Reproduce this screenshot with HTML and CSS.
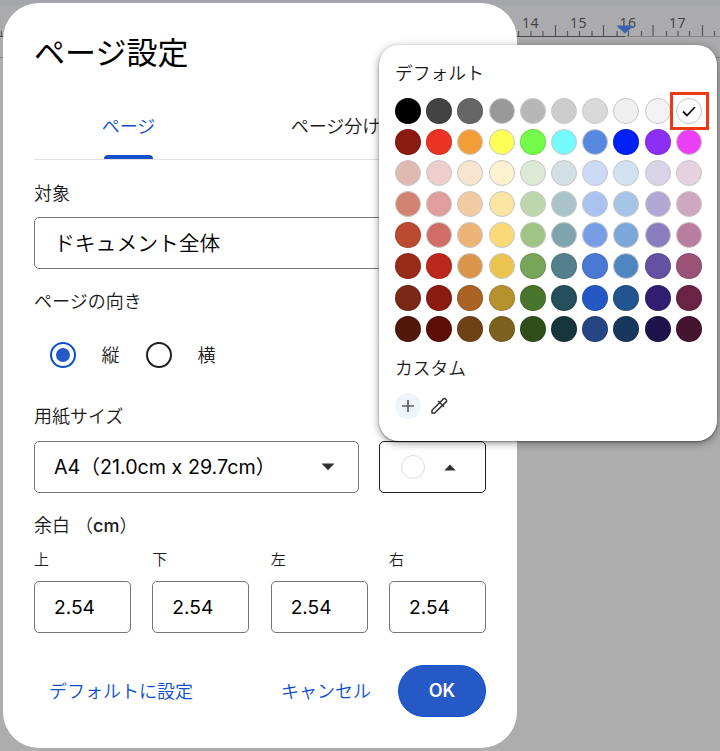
FILE: index.html
```html
<!DOCTYPE html>
<html lang="ja">
<head>
    <meta charset="UTF-8">
    <meta name="viewport" content="width=device-width, initial-scale=1.0">
    <title>ページ設定</title>
    <link rel="stylesheet" href="styles.css">
</head>
<body>

    <div class="ruler">
        <svg width="720" height="60" viewBox="0 0 720 60">
            <g class="ruler-numbers">
                <text x="530.5" y="28">14</text>
                <text x="578.5" y="28">15</text>
                <text x="628" y="28">16</text>
                <text x="677.5" y="28">17</text>
                <text x="727" y="28">18</text>
            </g>
            <path class="tick" d="M555.5 25v11M603.5 25v11M653 25v11M702.5 25v11"/>
            <path class="tick" d="M1.5 31v5M518.5 31v5M531 31v5M543 31v5M567.5 31v5M579.5 31v5M592 31v5M617 31v5M628.5 31v5M641.5 31v5M666.5 31v5M678 31v5M689.5 31v5M714.5 31v5"/>
            <path class="line-dark" d="M0 36.5H625"/>
            <path class="line-light" d="M625 36.5H720M0 57.5H720"/>
            <path class="marker" d="M617.5 25.5H632.5V27L625 33.5L617.5 27Z"/>
        </svg>
    </div>

    <div class="dialog">
        <h1>ページ設定</h1>

        <div class="tabs">
            <div class="tab active">ページ</div>
            <div class="tab">ページ分けなし</div>
        </div>

        <div class="label target-label">対象</div>
        <div class="select target-select">ドキュメント全体</div>

        <div class="label orientation-label">ページの向き</div>
        <div class="radios">
            <span class="radio checked"></span><span class="radio-text">縦</span>
            <span class="radio"></span><span class="radio-text">横</span>
        </div>

        <div class="label size-label">用紙サイズ</div>
        <div class="size-row">
            <div class="select size-select">
                <span>A4（21.0cm x 29.7cm）</span>
                <svg width="14" height="8" viewBox="0 0 14 8"><path d="M0.5 0.5h13L7 7.3z"/></svg>
            </div>
            <div class="select color-select">
                <span class="color-dot"></span>
                <svg width="12" height="7" viewBox="0 0 12 7"><path d="M0.3 6.5L6 0.5l5.7 6z"/></svg>
            </div>
        </div>

        <div class="label margin-label">余白 （<b>cm</b>）</div>
        <div class="margins">
            <div class="margin-field"><label>上</label><div class="input">2.54</div></div>
            <div class="margin-field"><label>下</label><div class="input">2.54</div></div>
            <div class="margin-field"><label>左</label><div class="input">2.54</div></div>
            <div class="margin-field"><label>右</label><div class="input">2.54</div></div>
        </div>

        <div class="actions">
            <button class="text-button">デフォルトに設定</button>
            <button class="text-button cancel">キャンセル</button>
            <button class="ok-button">OK</button>
        </div>
    </div>

    <div class="palette">
        <div class="palette-title">デフォルト</div>
        <div class="swatches" id="swatches"></div>
        <div class="palette-title custom-title">カスタム</div>
        <div class="custom-row">
            <span class="add-color">
                <svg width="14" height="14" viewBox="0 0 14 14"><path d="M7 1v12M1 7h12"/></svg>
            </span>
            <svg class="dropper" width="18" height="18" viewBox="0 0 18 18">
                <path d="M10.2 5.2L2 13.3V16h2.7l8.2-8.1"/>
                <path d="M8.2 4l5.8 5.8"/>
                <path d="M10.2 5.2l3-3.2c.7-.7 1.5-.7 2.1-.1l.9.9c.6.6.6 1.4-.1 2.1l-3.2 3"/>
            </svg>
        </div>
    </div>

    <script>
        const colors = [
            ["#000000", "#434343", "#666666", "#999999", "#b7b7b7", "#cccccc", "#d9d9d9", "#efefef", "#f3f3f3", "#ffffff"],
            ["#8b1a10", "#ea3323", "#f29d38", "#fffe54", "#75fb4c", "#75fbfd", "#5688e0", "#0021f5", "#8c2ff5", "#ea3ff7"],
            ["#dfbab1", "#eecdcd", "#f8e5d0", "#fdf2d0", "#dce9d5", "#d3e0e3", "#ccdaf5", "#d2e2f1", "#d8d3e7", "#e6d2dc"],
            ["#d18270", "#df9d9b", "#f2cba2", "#fae5a2", "#bdd6ac", "#a9c3c8", "#aac2f0", "#a6c5e4", "#b1a8d3", "#cea8be"],
            ["#bb4a31", "#d16d69", "#ecb476", "#f9d978", "#9fc285", "#80a4ae", "#779ee5", "#7ba8d8", "#8b7ebe", "#b87d9f"],
            ["#972b18", "#bb271a", "#da954b", "#eac351", "#78a55a", "#54808c", "#4a79d4", "#4f86c1", "#6351a2", "#9b5277"],
            ["#7b2817", "#8b1a10", "#aa6324", "#b8912f", "#48742c", "#254f5b", "#2458c5", "#22558f", "#311e71", "#692344"],
            ["#52170b", "#5d0e07", "#714116", "#7b611d", "#304e1b", "#18343c", "#264683", "#17375f", "#1e134a", "#45142e"]
        ];

        // Swatches that have a grey outline instead of their own colour
        const outlined = [
            [3, 4, 5, 6, 7, 8, 9],
            [2, 3, 5, 6, 9],
            [0, 1, 2, 3, 4, 5, 6, 7, 8, 9],
            [0, 1, 2, 3, 4, 5, 6, 7, 8, 9],
            [1, 2, 3, 4, 5, 6, 7, 8, 9],
            [2, 3, 7],
            [],
            []
        ];

        const swatches = document.getElementById("swatches");

        colors.forEach((row, y) => {
            row.forEach((color, x) => {
                const swatch = document.createElement("span");
                swatch.classList.add("swatch");
                if (outlined[y].includes(x)) {
                    swatch.classList.add("outlined");
                }
                swatch.style.backgroundColor = color;
                if (y === 0 && x === 9) {
                    swatch.classList.add("selected");
                    swatch.innerHTML = '<svg width="16" height="14" viewBox="0 0 16 14"><path d="M2 7.5l4 4L14 3"/></svg>';
                }
                swatches.appendChild(swatch);
            });
        });
    </script>

</body>
</html>
```

FILE: styles.css
```css
* {
    box-sizing: border-box;
    margin: 0;
    padding: 0;
}
body {
    position: relative;
    width: 720px;
    height: 751px;
    overflow: hidden;
    background-color: #adadad;
    font-family: Inter, 'Noto Sans CJK JP', sans-serif;
    font-weight: 350;
    color: #1a1a1a;
}
.ruler {
    height: 60px;
    background: linear-gradient(#a5a6aa 5px, #ababad 6px);
}
.ruler svg {
    display: block;
}
.ruler-numbers text {
    font-family: 'Open Sans', sans-serif;
    font-size: 14px;
    font-weight: 500;
    letter-spacing: 0.6px;
    text-anchor: middle;
    fill: #404040;
}
.tick {
    stroke: #58585a;
    stroke-width: 1.2;
    fill: none;
}
.line-dark {
    stroke: #484848;
}
.line-light {
    stroke: #868688;
}
.marker {
    fill: #3b62ae;
}
.dialog {
    position: absolute;
    left: 3px;
    top: 3px;
    width: 514px;
    height: 745px;
    padding: 30px 31px;
    background-color: #fff;
    border-radius: 36px;
}
h1 {
    font-size: 31px;
    font-weight: 400;
    line-height: 40px;
    color: #000;
}
.tabs {
    display: flex;
    height: 66px;
    margin-top: 21px;
    border-bottom: 1px solid #e0e0e0;
}
.tab {
    width: 261px;
    font-size: 18px;
    line-height: 66px;
    text-align: center;
}
.tab.active {
    display: flex;
    flex-direction: column;
    align-items: center;
    width: 189px;
    color: #0b4fd0;
}
.tab.active::after {
    content: "";
    width: 49px;
    height: 4px;
    margin-top: -5px;
    background-color: #1650c8;
    border-radius: 4px 4px 0 0;
}
.label {
    font-size: 18px;
    line-height: 24px;
}
.label b {
    font-weight: 500;
}
.target-label {
    margin-top: 22px;
}
.orientation-label {
    margin-top: 21px;
}
.size-label {
    margin-top: 37px;
}
.margin-label {
    margin-top: 21px;
}
.select {
    display: flex;
    align-items: center;
    height: 52px;
    padding: 0 19px;
    border: 1px solid #747775;
    border-radius: 5px;
    font-size: 19.7px;
    font-weight: 400;
    color: #000;
}
.size-select span {
    padding-bottom: 3px;
}
.target-select {
    margin-top: 11px;
    padding-bottom: 2px;
    font-size: 20.8px;
    font-weight: 350;
}
.radios {
    display: flex;
    align-items: center;
    height: 26px;
    margin-top: 28px;
    padding-left: 15.5px;
}
.radio {
    width: 26px;
    height: 26px;
    border: 2.5px solid #1f1f1f;
    border-radius: 50%;
}
.radio.checked {
    padding: 4px;
    border-color: #0b4fd0;
    background: #2459c6 content-box;
}
.radio-text {
    margin: 0 26px;
    padding-bottom: 3px;
    font-size: 18px;
}
.size-row {
    display: flex;
    justify-content: space-between;
    margin-top: 12px;
}
.size-select {
    justify-content: space-between;
    width: 325px;
    padding-right: 23px;
}
.select svg {
    fill: #303030;
}
.color-select {
    gap: 19px;
    width: 107px;
    padding-left: 21px;
    border-color: #1f1f1f;
}
.color-dot {
    width: 24px;
    height: 24px;
    border: 1px solid #dcdcdc;
    border-radius: 50%;
}
.margins {
    display: flex;
    justify-content: space-between;
    margin-top: 12px;
}
.margin-field {
    width: 97px;
}
.margin-field label {
    display: block;
    font-size: 15px;
    line-height: 20px;
}
.input {
    height: 52px;
    margin-top: 11px;
    padding-left: 19px;
    border: 1px solid #747775;
    border-radius: 5px;
    font-size: 19.2px;
    font-weight: 400;
    line-height: 50px;
    color: #000;
}
.actions {
    display: flex;
    align-items: center;
    margin-top: 32px;
    padding-left: 15px;
}
button {
    border: none;
    background: none;
    font-family: inherit;
    font-size: 18px;
}
.text-button {
    padding-bottom: 3px;
    font-weight: 350;
    color: #0b4fd0;
}
.cancel {
    margin-left: auto;
    margin-right: 27px;
}
.ok-button {
    width: 88px;
    height: 52px;
    padding-bottom: 2px;
    border: 1px solid #0b4fd0;
    border-radius: 26px;
    background-color: #2459c6;
    font-weight: 600;
    color: #fff;
}
.palette {
    position: absolute;
    left: 379px;
    top: 45px;
    width: 338px;
    height: 396px;
    padding: 17px 16px 0;
    background-color: #fff;
    border-radius: 20px;
    box-shadow: 0 2px 8px rgba(0, 0, 0, 0.4), 0 1px 2px rgba(0, 0, 0, 0.35);
}
.palette-title {
    font-size: 17.8px;
    line-height: 24px;
}
.swatches {
    display: grid;
    grid-template-columns: repeat(10, 26px);
    gap: 5.2px;
    margin-top: 11.5px;
}
.swatch {
    height: 26px;
    border: 1px solid rgba(0, 0, 0, 0.12);
    border-radius: 50%;
}
.swatch.outlined {
    border: 1.5px solid #c6c6c6;
}
.swatch.selected {
    position: relative;
    display: flex;
    align-items: center;
    justify-content: center;
}
/* Red frame round the selected colour */
.swatch.selected::after {
    content: "";
    box-sizing: border-box;
    position: absolute;
    left: -7px;
    top: -7px;
    width: 39px;
    height: 38px;
    border: 3px solid #eb3a16;
}
.swatch path {
    fill: none;
    stroke: #111;
    stroke-width: 1.8;
}
.custom-title {
    margin-top: 15px;
}
.custom-row {
    display: flex;
    align-items: center;
    gap: 9px;
    margin-top: 12px;
}
.add-color {
    display: flex;
    align-items: center;
    justify-content: center;
    width: 26px;
    height: 26px;
    border-radius: 50%;
    background-color: #eff3fa;
}
.add-color path {
    stroke: #5c5f62;
    stroke-width: 1.7;
}
.dropper path {
    fill: none;
    stroke: #333;
    stroke-width: 1.5;
}
```
